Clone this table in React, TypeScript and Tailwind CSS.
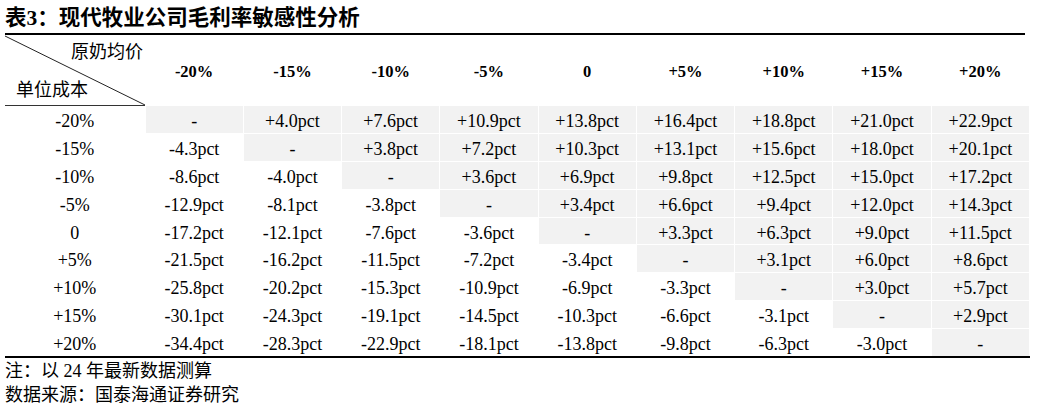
const cols = ['-20%', '-15%', '-10%', '-5%', '0', '+5%', '+10%', '+15%', '+20%'];

const rows: { label: string; values: string[] }[] = [
  { label: '-20%', values: ['-', '+4.0pct', '+7.6pct', '+10.9pct', '+13.8pct', '+16.4pct', '+18.8pct', '+21.0pct', '+22.9pct'] },
  { label: '-15%', values: ['-4.3pct', '-', '+3.8pct', '+7.2pct', '+10.3pct', '+13.1pct', '+15.6pct', '+18.0pct', '+20.1pct'] },
  { label: '-10%', values: ['-8.6pct', '-4.0pct', '-', '+3.6pct', '+6.9pct', '+9.8pct', '+12.5pct', '+15.0pct', '+17.2pct'] },
  { label: '-5%', values: ['-12.9pct', '-8.1pct', '-3.8pct', '-', '+3.4pct', '+6.6pct', '+9.4pct', '+12.0pct', '+14.3pct'] },
  { label: '0', values: ['-17.2pct', '-12.1pct', '-7.6pct', '-3.6pct', '-', '+3.3pct', '+6.3pct', '+9.0pct', '+11.5pct'] },
  { label: '+5%', values: ['-21.5pct', '-16.2pct', '-11.5pct', '-7.2pct', '-3.4pct', '-', '+3.1pct', '+6.0pct', '+8.6pct'] },
  { label: '+10%', values: ['-25.8pct', '-20.2pct', '-15.3pct', '-10.9pct', '-6.9pct', '-3.3pct', '-', '+3.0pct', '+5.7pct'] },
  { label: '+15%', values: ['-30.1pct', '-24.3pct', '-19.1pct', '-14.5pct', '-10.3pct', '-6.6pct', '-3.1pct', '-', '+2.9pct'] },
  { label: '+20%', values: ['-34.4pct', '-28.3pct', '-22.9pct', '-18.1pct', '-13.8pct', '-9.8pct', '-6.3pct', '-3.0pct', '-'] },
];

const font = { fontFamily: '"Liberation Serif", "Noto Sans CJK SC", serif' };

export default function App() {
  return (
    <div className="w-[1037px] h-[409px] bg-white text-black overflow-hidden" style={font}>
      <div className="px-[5px] pt-[6px] w-[1030px]">
        {/* Title */}
        <div className="h-[29px] border-b-2 border-black text-[21.5px] font-bold leading-[25px]">
          表3：现代牧业公司毛利率敏感性分析
        </div>

        {/* Sensitivity table */}
        <table className="w-[1025px] table-fixed border-collapse border-b-2 border-black">
          <colgroup>
            <col className="w-[140px]" />
            {cols.map((c) => (
              <col key={c} />
            ))}
          </colgroup>
          <thead>
            <tr className="h-[70px] border-b border-[#333]">
              <th className="relative p-0 font-normal">
                <svg className="absolute inset-0 w-full h-full" preserveAspectRatio="none" viewBox="0 0 140 70">
                  <line x1="0" y1="1" x2="140" y2="70" stroke="#222" strokeWidth="1" />
                </svg>
                <div className="flex flex-col justify-between h-[70px] pt-[4px] pb-[2px] text-[18px] leading-[26px]">
                  <span className="self-end pr-[2px]">原奶均价</span>
                  <span className="self-start pl-[11px]">单位成本</span>
                </div>
              </th>
              {cols.map((c) => (
                <th key={c} className="text-[16.5px] font-bold text-center pt-[4px]">
                  {c}
                </th>
              ))}
            </tr>
          </thead>
          <tbody>
            {rows.map((r, ri) => (
              <tr key={r.label} className="h-[27.9px]">
                <td className="text-center text-[18px] leading-[20px] pt-[3px] pb-0 px-0">{r.label}</td>
                {r.values.map((v, ci) => (
                  <td
                    key={ci}
                    className={`text-center text-[18px] leading-[20px] pt-[3px] pb-0 px-0 border border-white ${
                      ci >= ri ? 'bg-[#f2f2f2]' : 'bg-white'
                    }`}
                  >
                    {v}
                  </td>
                ))}
              </tr>
            ))}
          </tbody>
        </table>

        {/* Notes */}
        <div className="pt-[1px] text-[18px] leading-[24px]">
          <div>注：以 24 年最新数据测算</div>
          <div>数据来源：国泰海通证券研究</div>
        </div>
      </div>
    </div>
  );
}
